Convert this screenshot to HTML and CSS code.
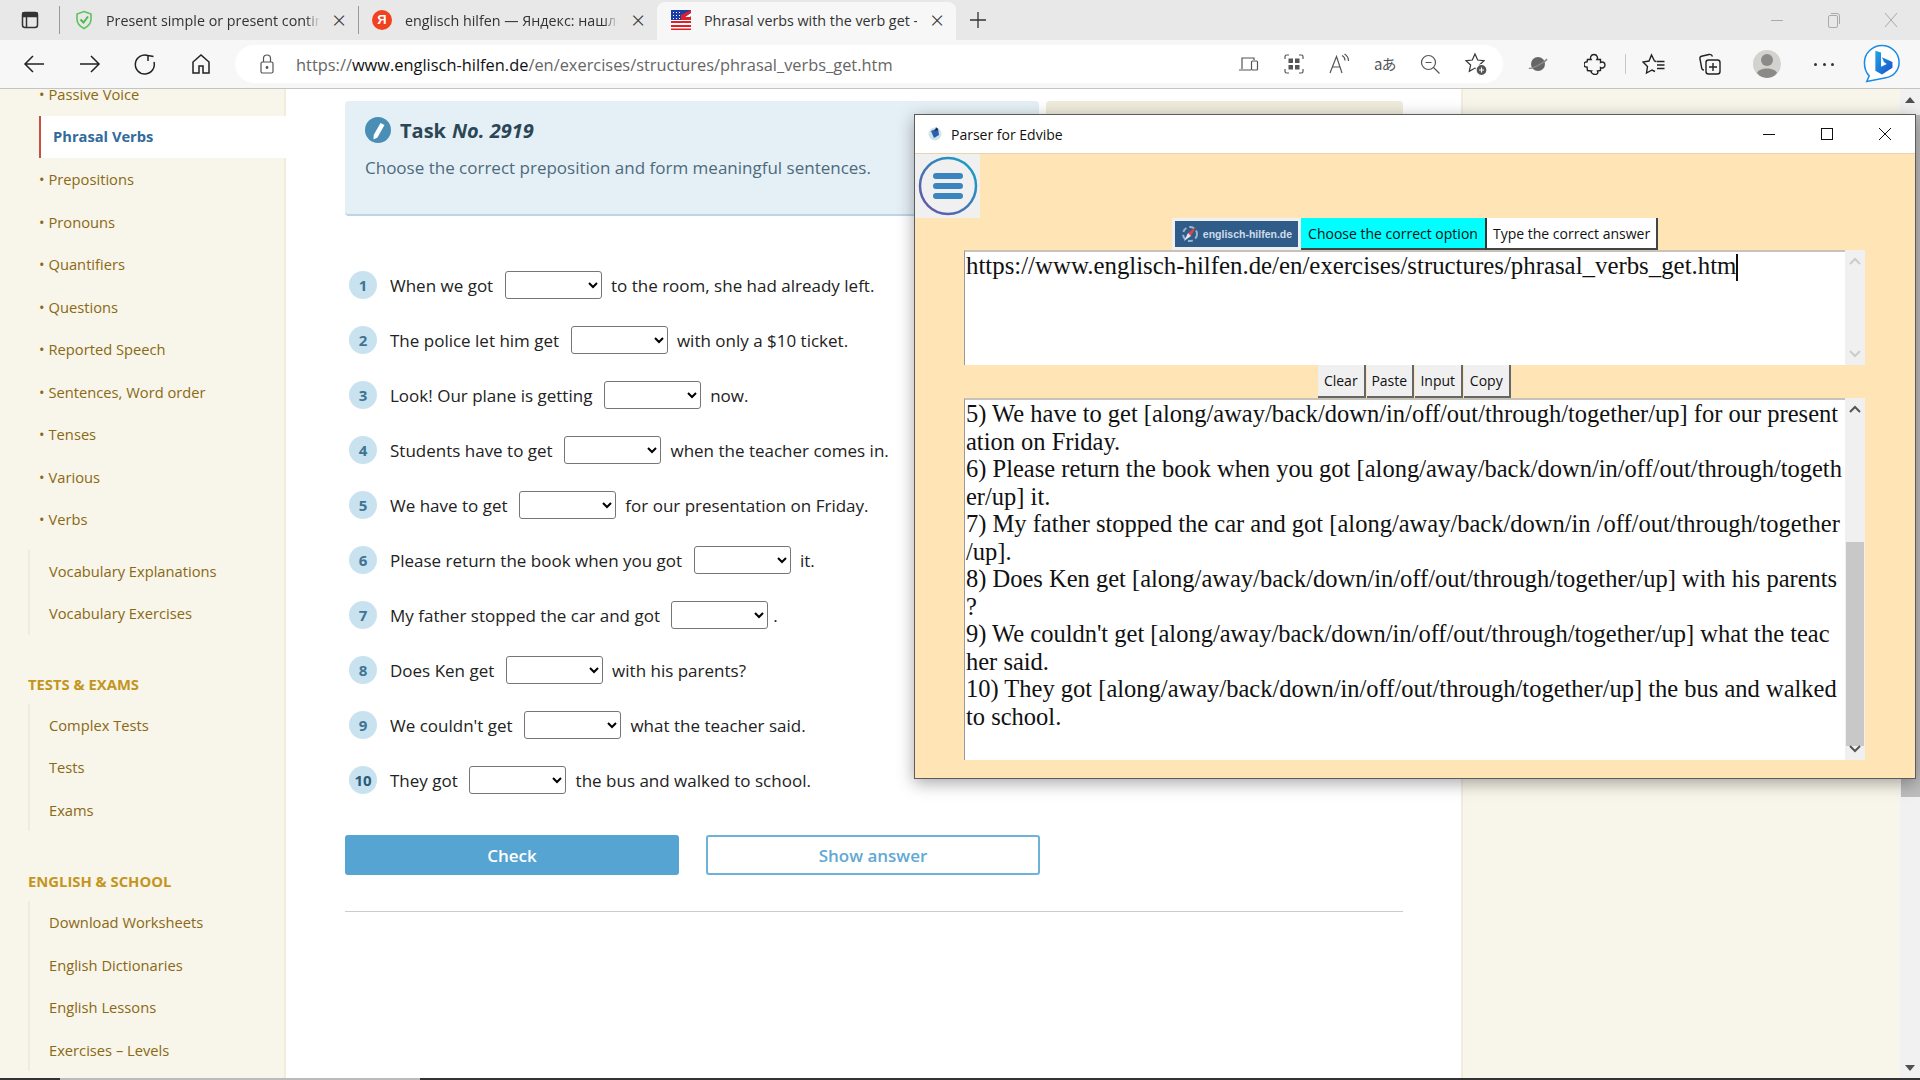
FILE: index.html
```html
<!DOCTYPE html>
<html lang="en">
<head>
  <meta charset="UTF-8">
  <title>Phrasal verbs with the verb get</title>
  <link rel="stylesheet" href="styles.css">
</head>
<body>

<div class="browser">

  <!-- tab strip -->
  <div class="tabstrip">
    <svg class="tab-actions" width="20" height="20" viewBox="0 0 20 20" fill="none" stroke="#333" stroke-width="1.5"><rect x="2.5" y="2.5" width="15" height="15" rx="2.5"/><path d="M3 3h14v3.5H3z" fill="#333"/><path d="M6.5 6v11"/></svg>
    <span class="tab-sep first"></span>
    <div class="tab">
      <svg width="20" height="20" viewBox="0 0 20 20" fill="none"><path d="M10 1.500l7 2.500v5c0 4.500-3 7.500-7 9.500-4-2-7-5-7-9.500V4z" stroke="#5cc45c" stroke-width="1.600"/><path d="M6.500 9.500l3 3 4.500-6" stroke="#4db84d" stroke-width="2"/></svg>
      <span class="tab-title">Present simple or present contin</span>
      <span class="tab-close">×</span>
    </div>
    <span class="tab-sep"></span>
    <div class="tab">
      <span class="ya-icon">Я</span>
      <span class="tab-title">englisch hilfen — Яндекс: нашло</span>
      <span class="tab-close">×</span>
    </div>
    <div class="tab active">
      <svg width="20" height="20" viewBox="0 0 20 20"><rect width="20" height="20" fill="#fff"/><rect width="10" height="10" fill="#1a3ea8"/><path d="M10 0h10v3l-6 4h-4zM16 10h4V6z" fill="#1a3ea8"/><path d="M0 11h20v2H0zM0 15h20v2H0zM0 18.500h20V20H0zM10 5l10-5v2.500L12 8h-2zM10 7h10v3H10z" fill="#e01f26"/><path d="M2 2h1v1H2zM5 2h1v1H5zM8 2h1v1H8zM2 5h1v1H2zM5 5h1v1H5zM8 5h1v1H8zM2 8h1v1H2zM5 8h1v1H5zM8 8h1v1H8z" fill="#fff"/></svg>
      <span class="tab-title">Phrasal verbs with the verb get -</span>
      <span class="tab-close">×</span>
    </div>
    <svg class="new-tab" width="18" height="18" viewBox="0 0 18 18" stroke="#333" stroke-width="1.3"><path d="M9 1v16M1 9h16"/></svg>
    <div class="win-controls">
      <svg width="14" height="14" viewBox="0 0 14 14" stroke="#aaa"><path d="M1 7.500h12"/></svg>
      <svg width="14" height="16" viewBox="0 0 14 16" fill="none" stroke="#aaa"><rect x="1.500" y="3.500" width="9" height="12" rx="1.500"/><path d="M4 1.500h6a2.500 2.500 0 0 1 2.500 2.500v8"/></svg>
      <svg width="14" height="16" viewBox="0 0 14 16" stroke="#aaa"><path d="M1 1l12 14M13 1L1 15"/></svg>
    </div>
  </div>

  <!-- toolbar -->
  <div class="toolbar">
    <div class="nav-btns">
      <svg width="24" height="24" viewBox="0 0 24 24" fill="none" stroke="#222" stroke-width="1.500"><path d="M22 12H3M11 4l-8 8 8 8"/></svg>
      <svg width="24" height="24" viewBox="0 0 24 24" fill="none" stroke="#222" stroke-width="1.500"><path d="M2 12h19M13 4l8 8-8 8"/></svg>
      <svg width="24" height="24" viewBox="0 0 24 24" fill="none" stroke="#222" stroke-width="1.500"><path d="M15 3.500A9.500 9.500 0 1 0 21 10M15 3v6M15 3.500l5.500 1"/></svg>
      <svg width="24" height="24" viewBox="0 0 24 24" fill="none" stroke="#222" stroke-width="1.500"><path d="M4 21V10l8-7 8 7v11h-6v-7h-4v7z"/></svg>
    </div>
    <div class="address">
      <svg class="lock" width="16" height="20" viewBox="0 0 16 20" fill="none" stroke="#555" stroke-width="1.200"><rect x="2" y="8" width="12" height="11" rx="1.500"/><path d="M4.500 8V4.500a3.500 3.500 0 0 1 7 0V8"/><circle cx="8" cy="13.500" r=".8" fill="#555"/></svg>
      <span class="url">https://<b>www.englisch-hilfen.de</b>/en/exercises/structures/phrasal_verbs_get.htm</span>
      <div class="addr-icons">
        <svg width="22" height="22" viewBox="0 0 22 22" fill="none" stroke="#555" stroke-width="1.200"><path d="M4 16V5h12v2M1 17h12"/><rect x="13.500" y="8" width="6" height="9" rx="1"/></svg>
        <svg width="22" height="22" viewBox="0 0 22 22" fill="none" stroke="#555" stroke-width="1.200"><path d="M2 6V3.500A1.500 1.500 0 0 1 3.500 2H6M16 2h2.500A1.500 1.500 0 0 1 20 3.500V6M20 16v2.500a1.500 1.500 0 0 1-1.500 1.500H16M6 20H3.500A1.500 1.500 0 0 1 2 18.500V16"/><path d="M5.500 5.500h4.500v4.500H5.500zM12 5.500h4.500v4.500H12zM5.500 12h4.500v4.500H5.500zM12 12h4.500v4.500H12z" fill="#555" stroke="none"/></svg>
        <svg width="22" height="22" viewBox="0 0 22 22" fill="none" stroke="#555" stroke-width="1.200"><path d="M2 20L8.500 3.500 14 20M4.500 14h8M14 2.500c2 1 3 3 3 5M16.500 1c2.500 1.500 4 4 4 7"/></svg>
        <span class="translate">aあ</span>
        <svg width="22" height="22" viewBox="0 0 22 22" fill="none" stroke="#555" stroke-width="1.200"><circle cx="9.500" cy="9.500" r="7"/><path d="M14.500 14.500L20.500 20.500M6.500 9.500h6"/></svg>
        <svg width="24" height="24" viewBox="0 0 24 24" fill="none" stroke="#333" stroke-width="1.200"><path d="M11 2l2.700 6 6.300.7-4.600 4.300 1.300 6.300-5.700-3.200-5.700 3.200 1.300-6.300L2 8.700 8.300 8z"/><circle cx="17.500" cy="18" r="5.500" fill="#555" stroke="#fff"/><path d="M15 18h5M17.500 15.500v5" stroke="#fff"/></svg>
      </div>
    </div>
    <div class="tool-icons">
      <svg class="t-planet" width="20" height="20" viewBox="0 0 20 20"><circle cx="10" cy="10" r="7" fill="#666"/><path d="M1 14c2 2 16-6 18-9" fill="none" stroke="#888" stroke-width="1.500"/></svg>
      <svg class="t-puzzle" width="22" height="22" viewBox="0 0 22 22" fill="none" stroke="#222" stroke-width="1.400"><path d="M3.500 6.500H7C6 5 6.500 1.500 10 1.500S14 5 13 6.500h3.500V9.500c1.500-1 4.500-.5 4.500 2.500s-3 3.500-4.500 2.500v3l-3 .5c1 1.500 0 3.500-2.500 3.500S6.500 19 7.500 18l-4-.5-.5-3.500c-2 .5-3-1-3-2.500S1 8.500 3 9z"/></svg>
      <span class="t-sep"></span>
      <svg class="t-fav" width="24" height="22" viewBox="0 0 24 22" fill="none" stroke="#222" stroke-width="1.400"><path d="M14 8.500L12.500 8 9.500 2 7 8l-6 1 4.500 4.500L4.500 20l5.500-3 3 1.500M14.500 8.500h8M15 12h7.500M15 15.500h7.500"/></svg>
      <svg class="t-coll" width="24" height="24" viewBox="0 0 24 24" fill="none" stroke="#222" stroke-width="1.400"><path d="M6 18c-1 0-2-.5-2.200-1.500L2 7c-.3-1.500.5-2.500 1.500-2.800L11 2.500c1.500-.3 3 .5 3.500 2"/><rect x="8" y="8" width="14" height="14" rx="2.500"/><path d="M15 11v8M11 15h8"/></svg>
      <svg class="t-avatar" width="28" height="28" viewBox="0 0 28 28"><circle cx="14" cy="14" r="14" fill="#d4d2cf"/><circle cx="14" cy="10" r="6" fill="#8c8a88"/><path d="M4 23c2-6 18-6 20 0-5 6.500-15 6.500-20 0z" fill="#8c8a88"/></svg>
      <span class="t-dots"><i></i><i></i><i></i></span>
      <svg class="t-bing" width="38" height="40" viewBox="0 0 40 42"><path d="M20 1.500c10 0 18 8 18 18 0 9-7 15-14 16L4 39.500l2.500-6C3 30 1.500 25 1.500 19.500c0-10 8.500-18 18.500-18z" fill="#fff" stroke="#1a8ce8" stroke-width="1.600"/><path d="M13 7l6 2v15l6-3-3-2-2-5 11 5v6l-11 7-7-4z" fill="url(#bingfill)"/><defs><linearGradient id="bingfill" x1="0" y1="0" x2="1" y2="1"><stop offset="0" stop-color="#1fa7e8"/><stop offset="1" stop-color="#1b4fc9"/></linearGradient></defs></svg>
    </div>
  </div>

  <!-- page -->
  <div class="page">
    <aside class="sidebar">
      <ul class="menu">
        <li class="bullet">Passive Voice</li>
        <li class="current">Phrasal Verbs</li>
        <li class="bullet">Prepositions</li>
        <li class="bullet">Pronouns</li>
        <li class="bullet">Quantifiers</li>
        <li class="bullet">Questions</li>
        <li class="bullet">Reported Speech</li>
        <li class="bullet">Sentences, Word order</li>
        <li class="bullet">Tenses</li>
        <li class="bullet">Various</li>
        <li class="bullet">Verbs</li>
      </ul>
      <ul class="group">
        <li>Vocabulary Explanations</li>
        <li>Vocabulary Exercises</li>
      </ul>
      <h4>Tests &amp; Exams</h4>
      <ul class="group">
        <li>Complex Tests</li>
        <li>Tests</li>
        <li>Exams</li>
      </ul>
      <h4>English &amp; School</h4>
      <ul class="group">
        <li>Download Worksheets</li>
        <li>English Dictionaries</li>
        <li>English Lessons</li>
        <li>Exercises – Levels</li>
      </ul>
    </aside>

    <main class="content">
      <div class="boxes">
        <div class="task">
          <h3>
            <svg width="26" height="26" viewBox="0 0 26 26"><circle cx="13" cy="13" r="13" fill="#4a8db5"/><path d="M15.500 6l4 2-7 12.500-4 2 .2-4.500z" fill="#fff"/></svg>
            Task <i>No. 2919</i>
          </h3>
          <p>Choose the correct preposition and form meaningful sentences.</p>
        </div>
        <div class="note"></div>
      </div>

      <div class="exercise">
        <div class="row"><span class="num">1</span>When we got <select><option></option></select> to the room, she had already left.</div>
        <div class="row"><span class="num">2</span>The police let him get <select><option></option></select> with only a $10 ticket.</div>
        <div class="row"><span class="num">3</span>Look! Our plane is getting <select><option></option></select> now.</div>
        <div class="row"><span class="num">4</span>Students have to get <select><option></option></select> when the teacher comes in.</div>
        <div class="row"><span class="num">5</span>We have to get <select><option></option></select> for our presentation on Friday.</div>
        <div class="row"><span class="num">6</span>Please return the book when you got <select><option></option></select> it.</div>
        <div class="row"><span class="num">7</span>My father stopped the car and got <select><option></option></select>.</div>
        <div class="row"><span class="num">8</span>Does Ken get <select><option></option></select> with his parents?</div>
        <div class="row"><span class="num">9</span>We couldn't get <select><option></option></select> what the teacher said.</div>
        <div class="row"><span class="num">10</span>They got <select><option></option></select> the bus and walked to school.</div>
      </div>

      <div class="actions">
        <button class="check">Check</button>
        <button class="show">Show answer</button>
      </div>
      <hr>
    </main>

    <aside class="right-col"></aside>

    <div class="page-scroll">
      <span class="arrow-up"></span>
      <span class="page-thumb"></span>
      <span class="arrow-down"></span>
    </div>
  </div>

  <div class="taskbar"><span class="tb-light"></span></div>
</div>

<!-- parser window -->
<div class="window">
  <div class="titlebar">
    <svg width="16" height="16" viewBox="0 0 16 16"><circle cx="8" cy="8" r="6.500" fill="#cfe3e8"/><path d="M4 5l7-3 1 7-5 3z" fill="#2a5fb0"/><path d="M9 1l2 3-3 1z" fill="#223"/></svg>
    <span class="win-title">Parser for Edvibe</span>
    <div class="title-btns">
      <svg width="12" height="12" viewBox="0 0 12 12" stroke="#111"><path d="M0 6.500h12"/></svg>
      <svg width="12" height="12" viewBox="0 0 12 12" fill="none" stroke="#111"><rect x=".5" y=".5" width="11" height="11"/></svg>
      <svg width="12" height="12" viewBox="0 0 12 12" stroke="#111"><path d="M0 0l12 12M12 0L0 12"/></svg>
    </div>
  </div>
  <div class="client">
    <div class="menu-btn">
      <svg width="60" height="60" viewBox="0 0 60 60" fill="none">
        <defs><linearGradient id="ring" x1="1" y1="0" x2="0" y2="1"><stop offset="0" stop-color="#12a5c8"/><stop offset="1" stop-color="#6a50a8"/></linearGradient></defs>
        <circle cx="30" cy="30" r="28" stroke="url(#ring)" stroke-width="2.500"/>
        <path d="M18 20h24M18 30h24M18 40h24" stroke="#3a85bd" stroke-width="6" stroke-linecap="round"/>
      </svg>
    </div>

    <div class="site-tabs">
      <span class="site-logo">
        <svg width="18" height="18" viewBox="0 0 18 18"><circle cx="9" cy="9" r="7" fill="none" stroke="#9db5cc" stroke-width="2" stroke-dasharray="5 3"/><path d="M15 2L7 8l3 3z" fill="#e0453a"/><path d="M3 16l4-8 3 3z" fill="#dfe6ee"/></svg>
        <span>englisch-hilfen.de</span>
      </span>
      <span class="site-tab on">Choose the correct option</span>
      <span class="site-tab">Type the correct answer</span>
    </div>

    <div class="url-area">
      <div class="text-box url-box">https://www.englisch-hilfen.de/en/exercises/structures/phrasal_verbs_get.htm<span class="caret"></span></div>
      <div class="scroll faint">
        <svg width="14" height="10" viewBox="0 0 14 10" fill="none" stroke="#ccc" stroke-width="2"><path d="M2 8l5-5 5 5"/></svg>
        <svg width="14" height="10" viewBox="0 0 14 10" fill="none" stroke="#ccc" stroke-width="2"><path d="M2 2l5 5 5-5"/></svg>
      </div>
    </div>

    <div class="small-btns">
      <button>Clear</button>
      <button>Paste</button>
      <button>Input</button>
      <button>Copy</button>
    </div>

    <div class="output-area">
      <div class="text-box output">5) We have to get [along/away/back/down/in/off/out/through/together/up] for our present<br>ation on Friday.<br>6) Please return the book when you got [along/away/back/down/in/off/out/through/togeth<br>er/up] it.<br>7) My father stopped the car and got [along/away/back/down/in /off/out/through/together<br>/up].<br>8) Does Ken get [along/away/back/down/in/off/out/through/together/up] with his parents<br>?<br>9) We couldn't get [along/away/back/down/in/off/out/through/together/up] what the teac<br>her said.<br>10) They got [along/away/back/down/in/off/out/through/together/up] the bus and walked<br>to school.</div>
      <div class="scroll">
        <svg width="14" height="10" viewBox="0 0 14 10" fill="none" stroke="#555" stroke-width="2"><path d="M2 8l5-5 5 5"/></svg>
        <span class="thumb"></span>
        <svg width="14" height="10" viewBox="0 0 14 10" fill="none" stroke="#555" stroke-width="2"><path d="M2 2l5 5 5-5"/></svg>
      </div>
    </div>
  </div>
</div>

</body>
</html>
```

FILE: styles.css
```css
* {
  box-sizing: border-box;
}

body {
  margin: 0;
  font-family: "Open Sans", sans-serif;
  overflow: hidden;
  background: #fff;
}

.browser {
  height: 1080px;
  display: flex;
  flex-direction: column;
}

/* tabs */
.tabstrip {
  height: 40px;
  background: #e8e8e8;
  display: flex;
  align-items: center;
  flex-shrink: 0;
  font-size: 15px;
  color: #333;
}

.tab-actions {
  margin-left: 20px;
}

.tab-sep {
  width: 1px;
  height: 28px;
  background: #999;
}

.tab-sep.first {
  margin-left: 19px;
  margin-right: 14px;
}

.tab {
  width: 298px;
  height: 40px;
  padding: 0 12px 0 13px;
  display: flex;
  align-items: center;
  gap: 13px;
  flex-shrink: 0;
}

.tab:first-of-type {
  width: 284px;
  padding-left: 0;
  gap: 12px;
}

.tab.active {
  width: 299px;
  height: 38px;
  margin-top: 2px;
  padding-bottom: 2px;
  background: #f7f7f7;
  border-radius: 8px 8px 0 0;
  padding-left: 14px;
}

.tab-title {
  flex: 1;
  overflow: hidden;
  white-space: nowrap;
  font-size: 14.300px;
  -webkit-mask-image: linear-gradient(to left, transparent, #000 14px);
  mask-image: linear-gradient(to left, transparent, #000 14px);
}

.tab.active .tab-title {
  -webkit-mask-image: none;
  mask-image: none;
}

.tab-close {
  font-size: 24px;
  font-weight: 300;
  line-height: 1;
  width: 14px;
  text-align: center;
}

.ya-icon {
  width: 20px;
  height: 20px;
  border-radius: 50%;
  background: #f1411e;
  color: #fff;
  font: bold 13px/20px "Liberation Sans", sans-serif;
  text-align: center;
  flex-shrink: 0;
}

.new-tab {
  margin-left: 13px;
}

.win-controls {
  margin-left: auto;
  margin-right: 22px;
  display: flex;
  gap: 43px;
  align-items: center;
}

/* toolbar */
.toolbar {
  height: 49px;
  background: #f7f7f7;
  border-bottom: 1px solid #c4c4c4;
  display: flex;
  align-items: center;
  flex-shrink: 0;
  position: relative;
}

.nav-btns {
  width: 235px;
  padding-left: 22px;
  display: flex;
  gap: 31.500px;
}

.address {
  width: 1268px;
  height: 38px;
  background: #fff;
  border-radius: 19px;
  display: flex;
  align-items: center;
  padding-left: 24px;
}

.url {
  margin-left: 21px;
  font-size: 16.400px;
  color: #666;
}

.url b {
  font-weight: 400;
  color: #111;
}

.addr-icons {
  margin-left: auto;
  margin-right: 15px;
  display: flex;
  align-items: center;
  gap: 23px;
}

.translate {
  width: 22px;
  margin-left: 1px;
  font-family: "Noto Sans CJK JP", sans-serif;
  font-size: 15px;
  line-height: 22px;
  color: #555;
  white-space: nowrap;
  letter-spacing: -1px;
}

.tool-icons {
  flex: 1;
  display: flex;
  align-items: center;
  padding-left: 25px;
}

.t-puzzle { margin-left: 36px; }
.t-sep { width: 1px; height: 20px; background: #c8c8c8; margin-left: 19px; }
.t-fav { margin-left: 16px; }
.t-coll { margin-left: 32px; }
.t-avatar { margin-left: 31px; }
.t-dots { margin-left: 33px; width: 20px; display: flex; justify-content: space-between; }
.t-dots i { width: 3px; height: 3px; border-radius: 50%; background: #333; }
.t-bing { margin-left: 29px; }

/* page */
.page {
  flex: 1;
  display: flex;
  overflow: hidden;
  min-height: 0;
}

.sidebar {
  width: 286px;
  flex-shrink: 0;
  background: #f8f5ea;
  box-shadow: inset -2px 0 #f1ecdc;
  color: #8a6914;
  font-size: 14.700px;
  overflow: hidden;
}

.sidebar ul {
  list-style: none;
  margin: 0;
  padding: 0;
}

.menu {
  margin-top: -16px !important;
}

.menu li {
  height: 42.500px;
  line-height: 42.500px;
  margin-left: 39px;
}

.menu .bullet::before {
  content: "•";
  margin-right: 4px;
}

.menu .current {
  background: #fff;
  border-left: 2px solid #c9503c;
  padding-left: 12px;
  color: #336a9c;
  font-weight: 700;
  line-height: 41px;
}

.group {
  margin: 9px 0 0 28px !important;
  border-left: 2px solid #f0ebdc;
}

.group li {
  height: 42.500px;
  line-height: 42.500px;
  padding-left: 19px;
}

.sidebar h4 {
  margin: 39px 0 0 28px;
  height: 20px;
  line-height: 20px;
  font-size: 14.800px;
  font-weight: 700;
  color: #c3951f;
  text-transform: uppercase;
}

.sidebar h4 ~ h4 {
  margin-top: 40px;
}

.sidebar h4 + .group {
  margin-top: 10px !important;
}

.content {
  flex: 1;
  padding: 12px 58px 0 59px;
  background: #fff;
  color: #222;
  font-size: 17px;
}

.boxes {
  display: flex;
  gap: 7px;
}

.task {
  width: 694px;
  height: 115px;
  background: #e5f0f6;
  border-bottom: 2px solid #bad6e8;
  border-radius: 4px;
  padding: 16px 20px;
}

.task h3 {
  margin: 0;
  height: 26px;
  display: flex;
  align-items: center;
  gap: 9px;
  font-size: 20px;
  font-weight: 700;
  color: #2c4656;
}

.task i {
  margin-left: -3px;
}

.task p {
  margin: 13px 0 0;
  font-size: 17px;
  color: #4d6a7c;
}

.note {
  flex: 1;
  height: 60px;
  background: #f0ecdc;
  border-radius: 4px;
}

.exercise {
  margin-top: 55px;
}

.row {
  height: 28px;
  margin-bottom: 27px;
  padding-left: 4px;
  display: flex;
  align-items: center;
  white-space: pre;
  color: #222;
}

.num {
  width: 28px;
  height: 28px;
  border-radius: 50%;
  background: #c9e2f0;
  color: #3f7494;
  font-size: 15px;
  font-weight: 700;
  text-align: center;
  line-height: 28px;
  margin-right: 13px;
  flex-shrink: 0;
}

.row:last-child .num {
  color: #2c5b78;
}

.row select {
  width: 97px;
  height: 28px;
  background: #fff;
  border: 1px solid #767676;
  border-radius: 3px;
  margin: 0 5px 0 7px;
}

.actions {
  margin-top: 41px;
  display: flex;
  gap: 27px;
}

.actions button {
  width: 334px;
  height: 40px;
  border-radius: 3px;
  font-family: inherit;
  font-size: 17px;
  font-weight: 600;
}

.check {
  background: #56a4d2;
  border: none;
  color: #fff;
}

.show {
  background: #fff;
  border: 2px solid #6eb2da;
  color: #62a8d4;
}

hr {
  margin: 36px 0 0;
  border: none;
  border-top: 1px solid #ccc;
}

.right-col {
  width: 439px;
  flex-shrink: 0;
  background: #f8f5ea;
  border-left: 2px solid #f1ecdc;
}

.page-scroll {
  width: 20px;
  flex-shrink: 0;
  background: #f1f1f1;
  position: relative;
}

.arrow-up, .arrow-down {
  position: absolute;
  left: 5px;
  width: 0;
  height: 0;
  border-left: 5px solid transparent;
  border-right: 5px solid transparent;
}

.arrow-up {
  top: 8px;
  border-bottom: 6px solid #505050;
}

.arrow-down {
  bottom: 7px;
  border-top: 6px solid #505050;
}

.page-thumb {
  position: absolute;
  left: 1px;
  top: 26px;
  width: 19px;
  height: 682px;
  background: #bdbdbd;
}

.taskbar {
  height: 2px;
  background: #333;
  flex-shrink: 0;
}

.tb-light {
  display: block;
  width: 360px;
  height: 2px;
  margin-left: 60px;
  background: #bbb;
}

/* parser window */
.window {
  position: absolute;
  left: 914px;
  top: 114px;
  width: 1002px;
  height: 665px;
  border: 1px solid #5c5c5c;
  background: #ffe4b5;
  box-shadow: 0 4px 16px rgba(0, 0, 0, 0.35);
  font-family: "Open Sans", sans-serif;
}

.titlebar {
  height: 39px;
  background: #fff;
  border-bottom: 1px solid #e8d5b0;
  display: flex;
  align-items: center;
  padding-left: 12px;
  font-size: 14px;
  color: #111;
}

.win-title {
  margin-left: 8px;
}

.title-btns {
  margin-left: auto;
  margin-right: 24px;
  display: flex;
  gap: 46px;
}

.menu-btn {
  width: 65px;
  height: 64px;
  background: #f0f0f0;
  display: flex;
  align-items: center;
  justify-content: center;
}

.site-tabs {
  height: 32px;
  margin-left: 257px;
  display: flex;
  align-items: stretch;
  font-size: 14px;
  color: #111;
}

.site-logo {
  width: 129px;
  background: #305c8a;
  border: 3px solid #f0f0f0;
  display: flex;
  align-items: center;
  justify-content: center;
  gap: 4px;
  color: #cfdbe8;
  font: bold 10.500px "Liberation Sans", sans-serif;
}

.site-tab {
  background: #fff;
  border-right: 2px solid #444;
  border-bottom: 2px solid #444;
  line-height: 31px;
  padding: 0 6px;
  white-space: nowrap;
  width: 171px;
  text-align: center;
}

.site-tab.on {
  background: #00ffff;
  width: 186px;
  border-right-color: #333;
}

.url-area, .output-area {
  margin-left: 49px;
  display: flex;
  width: 901px;
}

.url-area {
  height: 115px;
}

.output-area {
  height: 362px;
}

.text-box {
  width: 881px;
  background: #fff;
  border-top: 2px solid #c8c3b8;
  border-left: 1px solid #999;
  font-family: "Liberation Serif", serif;
  font-size: 24.500px;
  line-height: 27.500px;
  color: #111;
  padding-left: 1px;
  white-space: nowrap;
  overflow: hidden;
}

.url-box {
  font-size: 24.850px;
}

.caret {
  display: inline-block;
  width: 2px;
  height: 27px;
  background: #111;
  vertical-align: -7px;
}

.scroll {
  width: 20px;
  background: #f0f0f0;
  display: flex;
  flex-direction: column;
  align-items: center;
  justify-content: space-between;
  padding: 6px 0;
}

.thumb {
  align-self: stretch;
  background: #c8c8c8;
  margin: 128px 1px -2px;
  flex: 1;
}

.small-btns {
  height: 33px;
  margin-left: 403px;
  display: flex;
  gap: 1px;
}

.small-btns button {
  width: 47.500px;
  height: 33px;
  padding: 0;
  background: #f0f0f0;
  border: none;
  border-right: 2px solid #666;
  border-bottom: 2px solid #666;
  font-family: inherit;
  font-size: 14px;
  color: #111;
}
```
